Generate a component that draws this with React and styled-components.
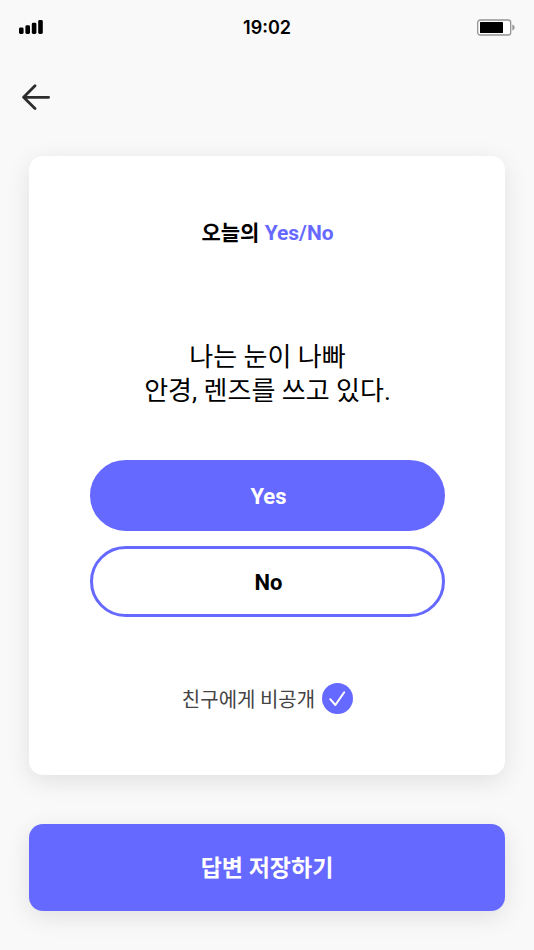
import React, { useState } from 'react'
import styled, { createGlobalStyle } from 'styled-components'

function App() {
  const [answer, setAnswer] = useState('yes')
  const [hidden, setHidden] = useState(true)

  return (
    <>
      <GlobalStyle />
      <StatusBar>
        <SignalIcon viewBox="0 0 24 14" aria-hidden="true">
          <rect x="0" y="7.6" width="4.6" height="6.4" rx="1.4" />
          <rect x="6.4" y="5.3" width="4.6" height="8.7" rx="1.4" />
          <rect x="12.8" y="2.7" width="4.6" height="11.3" rx="1.4" />
          <rect x="19.2" y="0" width="4.6" height="14" rx="1.4" />
        </SignalIcon>
        <Time>19:02</Time>
        <BatteryIcon viewBox="0 0 38 17" aria-hidden="true">
          <rect x="0.7" y="1" width="33" height="15" rx="2.6" fill="#fff" stroke="#949494" strokeWidth="1.3" />
          <rect x="3" y="3" width="23" height="11" rx="0.6" fill="#000" />
          <path d="M35.4 5.6c1.5.5 2.2 1.6 2.2 2.9s-.7 2.4-2.2 2.9z" fill="#949494" />
        </BatteryIcon>
      </StatusBar>
      <Header>
        <BackButton type="button" aria-label="뒤로">
          <svg width="28" height="26" viewBox="0 0 28 26" fill="none" stroke="#2d2d2d" strokeWidth="2.8" strokeLinecap="round" strokeLinejoin="round">
            <path d="M26.6 13.3H1.6M13 1.7L1.6 13.3L13 24.5" />
          </svg>
        </BackButton>
      </Header>
      <Main>
        <Card>
          <Title>오늘의 <Accent>Yes/No</Accent></Title>
          <Question>나는 눈이 나빠<br />안경, 렌즈를 쓰고 있다.</Question>
          <Answers>
            <AnswerButton type="button" $selected={answer === 'yes'} onClick={() => setAnswer('yes')}>Yes</AnswerButton>
            <AnswerButton type="button" $selected={answer === 'no'} onClick={() => setAnswer('no')}>No</AnswerButton>
          </Answers>
          <PrivateLabel htmlFor="private">
            친구에게 비공개
            <CheckWrap>
              <Checkbox id="private" type="checkbox" checked={hidden} onChange={(e) => setHidden(e.target.checked)} />
              <CheckIcon viewBox="0 0 31 31" aria-hidden="true">
                <path d="M8.2 16.2L13.4 22L22.2 9.2" />
              </CheckIcon>
            </CheckWrap>
          </PrivateLabel>
        </Card>
        <SaveButton type="button">답변 저장하기</SaveButton>
      </Main>
    </>
  )
}

const GlobalStyle = createGlobalStyle`
  * {
    box-sizing: border-box;
  }
  body {
    margin: 0;
    background-color: #f9f9f9;
    color: #000;
    font-family: Roboto, "Noto Sans CJK KR", sans-serif;
  }
  button {
    padding: 0;
    border: none;
    font-family: inherit;
    cursor: pointer;
  }
`
const StatusBar = styled.div`
  display: grid;
  grid-template-columns: 1fr auto 1fr;
  align-items: center;
  height: 54px;
  padding: 0 19px;
`
const SignalIcon = styled.svg`
  width: 24px;
  height: 14px;
`
const Time = styled.time`
  font-family: Inter, sans-serif;
  font-size: 18px;
  font-weight: 600;
`
const BatteryIcon = styled.svg`
  width: 38px;
  height: 17px;
  justify-self: end;
`
const Header = styled.header`
  display: flex;
  align-items: center;
  height: 86px;
  padding: 0 22px;
`
const BackButton = styled.button`
  display: flex;
  background: none;
`
const Main = styled.main`
  display: flex;
  flex-direction: column;
  gap: 49px;
  padding: 16px 29px 39px;
`
const Card = styled.section`
  display: flex;
  flex-direction: column;
  align-items: center;
  padding: 61px 60px 61px 61px;
  border-radius: 14px;
  background-color: #fff;
  box-shadow: 0 6px 24px rgba(0, 0, 0, 0.1);
`
const Title = styled.h1`
  margin: 0;
  font-size: 21px;
  font-weight: 700;
  line-height: 32px;
`
const Accent = styled.span`
  color: #6669ff;
`
const Question = styled.p`
  margin: 91px 0 52px;
  font-size: 26px;
  line-height: 34px;
  text-align: center;
`
const Answers = styled.div`
  display: flex;
  flex-direction: column;
  align-self: stretch;
  gap: 15px;
`
const AnswerButton = styled.button`
  height: 71px;
  padding: 2px 0 0 2px;
  border: 3px solid #6669ff;
  border-radius: 36px;
  background-color: ${(props) => (props.$selected ? '#6669ff' : '#fff')};
  color: ${(props) => (props.$selected ? '#fff' : '#000')};
  font-size: 22px;
  font-weight: 700;
`
const PrivateLabel = styled.label`
  display: flex;
  align-items: center;
  gap: 7px;
  margin-top: 66px;
  color: #444;
  font-family: "Noto Sans CJK KR", sans-serif;
  font-size: 20px;
  line-height: 31px;
  cursor: pointer;
`
const CheckWrap = styled.span`
  display: grid;
  width: 31px;
  height: 31px;
`
const Checkbox = styled.input`
  grid-area: 1 / 1;
  width: 100%;
  height: 100%;
  margin: 0;
  border-radius: 50%;
  background-color: #d5d5d5;
  appearance: none;
  cursor: pointer;
  &:checked {
    background-color: #6669ff;
  }
`
const CheckIcon = styled.svg`
  grid-area: 1 / 1;
  fill: none;
  stroke: #fff;
  stroke-width: 2;
  stroke-linecap: round;
  stroke-linejoin: round;
  pointer-events: none;
`
const SaveButton = styled.button`
  height: 87px;
  padding-bottom: 3px;
  border-radius: 14px;
  background-color: #6669ff;
  color: #fff;
  font-size: 23px;
  font-weight: 700;
  box-shadow: 0 6px 24px rgba(0, 0, 0, 0.1);
`

export default App
